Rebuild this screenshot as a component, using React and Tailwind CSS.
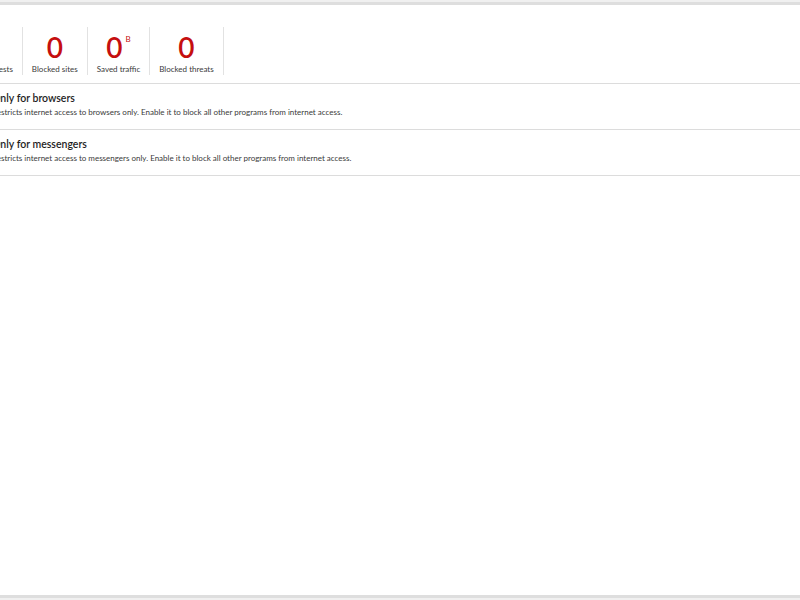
const stats = [
  { value: "0", label: "Blocked requests" },
  { value: "0", label: "Blocked sites" },
  { value: "0", unit: "B", label: "Saved traffic" },
  { value: "0", label: "Blocked threats" },
];

const modes = [
  {
    title: "Only for browsers",
    text: "Restricts internet access to browsers only. Enable it to block all other programs from internet access.",
  },
  {
    title: "Only for messengers",
    text: "Restricts internet access to messengers only. Enable it to block all other programs from internet access.",
  },
];

const StatCell = ({ value, unit, label }) => (
  <div className="flex h-[48px] flex-col items-center justify-between border-r border-[#e2e2e2] px-[9px]">
    <div className="mt-[6px] flex items-start text-[28px] font-semibold leading-[28px] text-[#c50f0f]">
      {value}
      {unit && (
        <span className="ml-[3px] mt-[2px] text-[8px] font-normal leading-[8px]">
          {unit}
        </span>
      )}
    </div>
    <div className="text-[8px] leading-[12px] text-[#3a3a3a]">{label}</div>
  </div>
);

const App = () => {
  return (
    <div
      className="h-[600px] w-[800px] overflow-hidden bg-white"
      style={{ fontFamily: '"Segoe UI", Lato, "Noto Sans", sans-serif' }}
    >
      <div className="h-[2px] bg-[#f0f0f0]" />
      <div className="h-[3px] bg-[#dedede]" />
      <div className="h-[590px] overflow-hidden">
        <div className="-ml-[56px]">
          <div className="flex pt-[22px] pb-[8px]">
            {stats.map((s) => (
              <StatCell key={s.label} {...s} />
            ))}
          </div>
        </div>
        <div className="border-t border-[#dcdcdc]">
          {modes.map((m) => (
            <div
              key={m.title}
              className="-ml-[8px] flex h-[46px] flex-col justify-center border-b border-[#dcdcdc] pb-[4px]"
            >
              <div className="text-[10.5px] font-semibold leading-[15px] text-[#1e1e1e]">
                {m.title}
              </div>
              <div className="mt-[1px] text-[8px] leading-[11px] text-[#3a3a3a]">
                {m.text}
              </div>
            </div>
          ))}
        </div>
      </div>
      <div className="h-[3px] bg-[#dedede]" />
      <div className="h-[2px] bg-[#f0f0f0]" />
    </div>
  );
};

export default App;
